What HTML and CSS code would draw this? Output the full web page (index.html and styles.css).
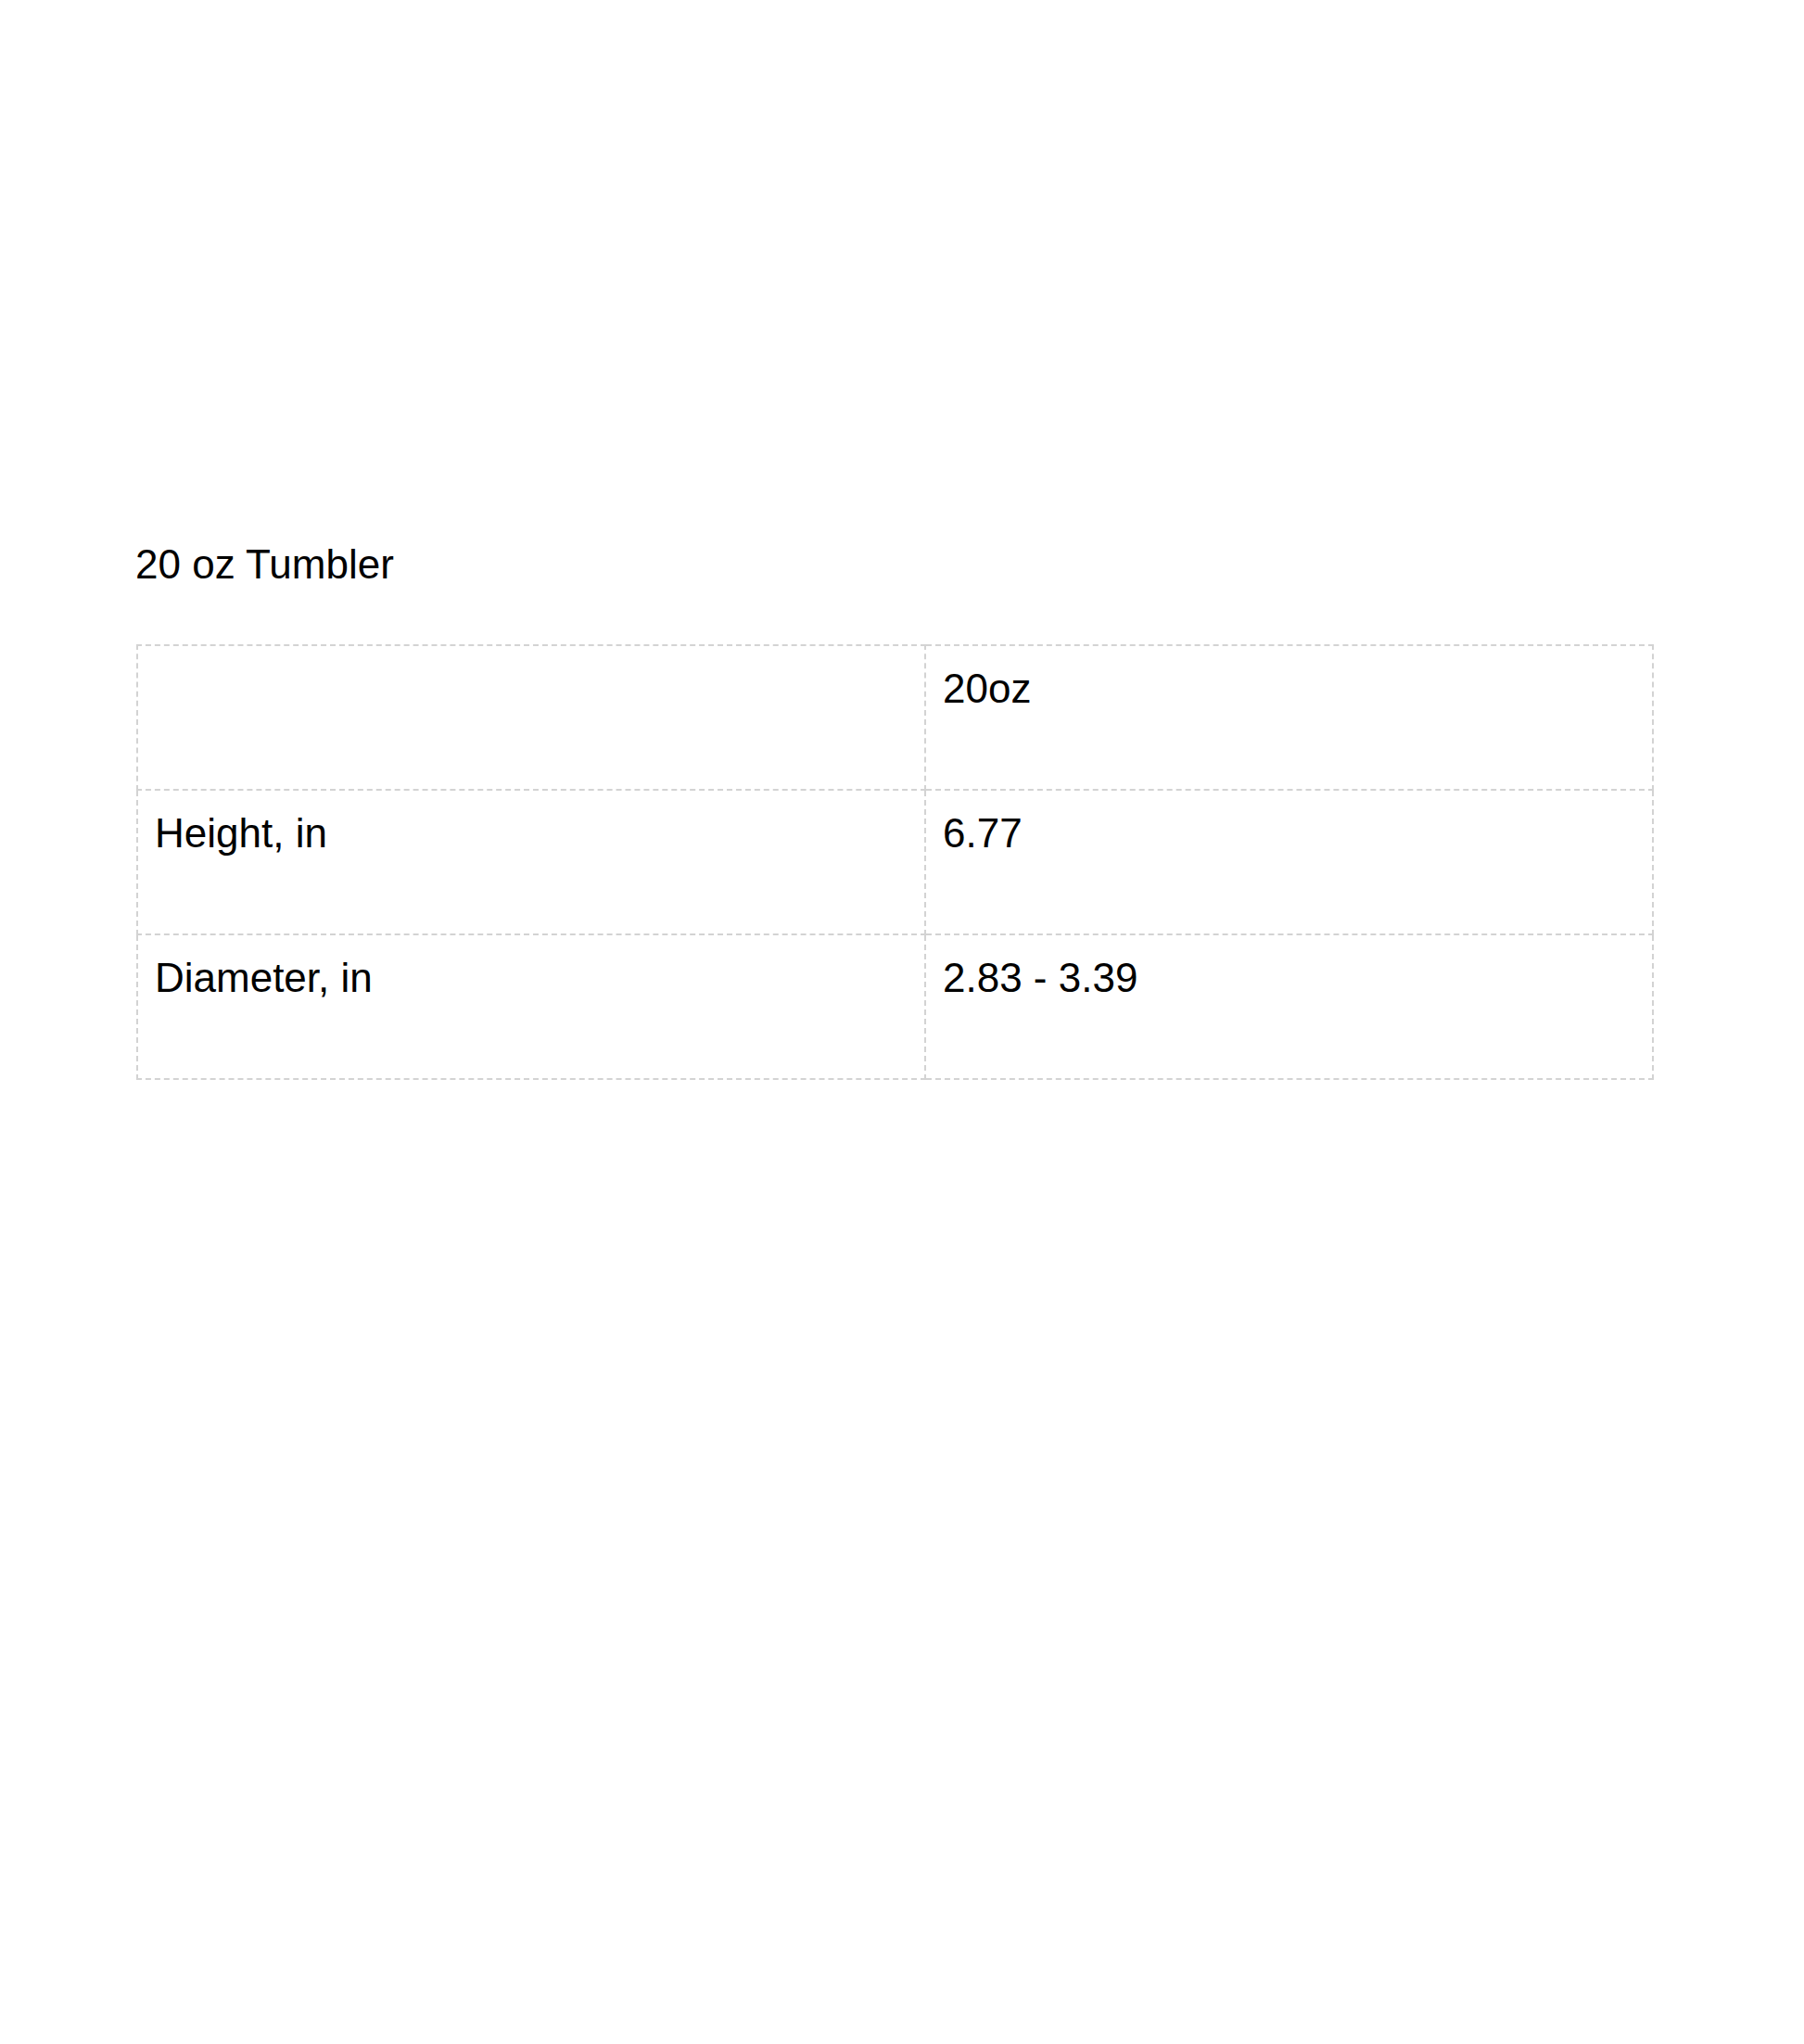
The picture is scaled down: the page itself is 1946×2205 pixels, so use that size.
FILE: index.html
```html
<!DOCTYPE html>
<html lang="en">
<head>
<meta charset="utf-8">
<title>20 oz Tumbler</title>
<link rel="stylesheet" href="styles.css">
</head>
<body>
<main class="page">
  <section class="size-chart">
    <h2 class="chart-title">20 oz Tumbler</h2>
    <table class="chart-table">
      <tbody>
        <tr>
          <td class="label-cell"></td>
          <td class="value-cell">20oz</td>
        </tr>
        <tr>
          <td class="label-cell">Height, in</td>
          <td class="value-cell">6.77</td>
        </tr>
        <tr>
          <td class="label-cell">Diameter, in</td>
          <td class="value-cell">2.83 - 3.39</td>
        </tr>
      </tbody>
    </table>
  </section>
</main>
</body>
</html>
```

FILE: styles.css
```css
html, body {
  margin: 0;
  padding: 0;
  background: #ffffff;
}

body {
  font-family: "Liberation Sans", Arial, sans-serif;
  color: #000000;
}

.page {
  padding: 584px 162px 0 146px;
  min-height: 2205px;
  box-sizing: border-box;
}

.size-chart {
  display: flex;
  flex-direction: column;
}

.chart-title {
  margin: 0 0 61px 0;
  font-size: 44px;
  line-height: 50px;
  font-weight: 400;
}

.chart-table {
  margin-left: 1px;
  width: 1637px;
  border-collapse: collapse;
  table-layout: fixed;
}

.chart-table td {
  border: 2px dashed #d3d3d3;
  vertical-align: top;
  font-size: 44px;
  line-height: 50px;
  padding: 21px 18px 0 18px;
  height: 156px;
  box-sizing: border-box;
}

.label-cell {
  width: 850px;
}
```
